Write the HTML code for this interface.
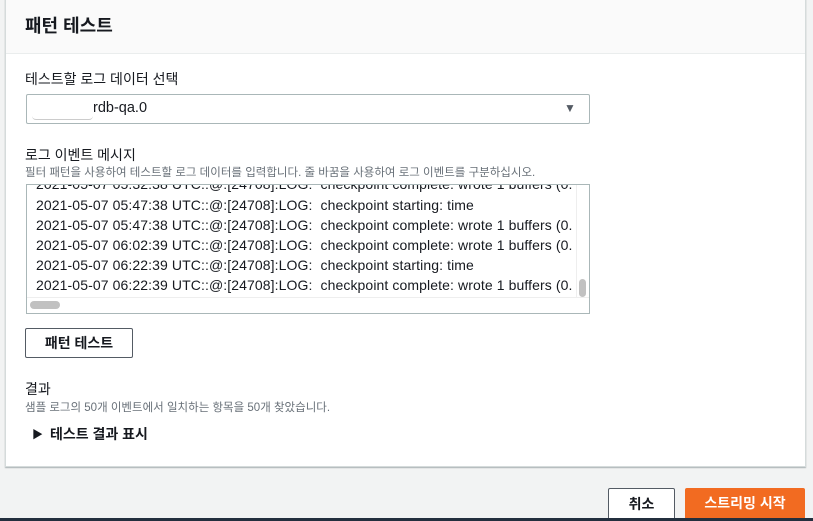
<!DOCTYPE html>
<html><head><meta charset="utf-8"><style>
*{margin:0;padding:0;box-sizing:border-box}
body{width:813px;height:521px;background:#f2f3f3;position:relative;overflow:hidden;font-family:"Liberation Sans","Noto Sans CJK KR",sans-serif;color:#16191f}
.abs{position:absolute;white-space:nowrap}
.panel{position:absolute;left:5px;top:-2px;width:801px;height:469px;background:#fff;border:1px solid #d5dbdb;box-shadow:0 1px 1px rgba(0,28,36,.3)}
.hdr{position:absolute;left:0;top:0;width:100%;height:55px;background:#fafafa;border-bottom:1px solid #eaeded}
.ta{position:absolute;left:26px;top:184px;width:564px;height:130px;border:1px solid #aab7b8;overflow:hidden;background:#fff}
.ln{position:absolute;left:9px;font-size:14px;letter-spacing:0.1px;white-space:nowrap;color:#16191f}
</style></head><body>
<div class="panel"><div class="hdr"></div></div>
<div class="abs" style="left:25px;top:12px;font-size:18px;font-weight:bold">패턴 테스트</div>
<div class="abs" style="left:25px;top:69px;font-size:14px">테스트할 로그 데이터 선택</div>
<div class="abs" style="left:26px;top:94px;width:564px;height:30px;border:1px solid #aab7b8;border-radius:2px;background:#fff"></div>
<div class="abs" style="left:32px;top:98px;width:61px;height:22px;border-bottom:1px solid #ccc;border-radius:0 0 4px 4px"></div>
<div class="abs" style="left:93px;top:100px;font-size:14.5px">rdb-qa.0</div>
<div class="abs" style="left:564px;top:101px;font-size:12px;color:#545b64">▼</div>
<div class="abs" style="left:25px;top:145px;font-size:14px">로그 이벤트 메시지</div>
<div class="abs" style="left:25px;top:164px;font-size:11.5px;color:#687078">필터 패턴을 사용하여 테스트할 로그 데이터를 입력합니다. 줄 바꿈을 사용하여 로그 이벤트를 구분하십시오.</div>
<div class="ta">
<div class="ln" style="top:-9px">2021-05-07 05:32:38 UTC::@:[24708]:LOG:&nbsp; checkpoint complete: wrote 1 buffers (0.</div>
<div class="ln" style="top:12px">2021-05-07 05:47:38 UTC::@:[24708]:LOG:&nbsp; checkpoint starting: time</div>
<div class="ln" style="top:32px">2021-05-07 05:47:38 UTC::@:[24708]:LOG:&nbsp; checkpoint complete: wrote 1 buffers (0.</div>
<div class="ln" style="top:52px">2021-05-07 06:02:39 UTC::@:[24708]:LOG:&nbsp; checkpoint complete: wrote 1 buffers (0.</div>
<div class="ln" style="top:72px">2021-05-07 06:22:39 UTC::@:[24708]:LOG:&nbsp; checkpoint starting: time</div>
<div class="ln" style="top:92px">2021-05-07 06:22:39 UTC::@:[24708]:LOG:&nbsp; checkpoint complete: wrote 1 buffers (0.</div>
<div style="position:absolute;left:0;top:112px;width:100%;height:18px;background:#fff;border-top:1px solid #eee"></div>
<div style="position:absolute;left:3px;top:116px;width:30px;height:8px;border-radius:4px;background:#c1c1c1"></div>
<div style="position:absolute;left:549px;top:0;width:14px;height:112px;background:#fff;border-left:1px solid #eee"></div>
<div style="position:absolute;left:552px;top:94px;width:7px;height:18px;border-radius:4px;background:#c1c1c1"></div>
</div>
<div class="abs" style="left:25px;top:328px;width:108px;height:30px;border:1px solid #545b64;border-radius:2px;background:#fff;font-size:14px;font-weight:bold;text-align:center;line-height:28px">패턴 테스트</div>
<div class="abs" style="left:25px;top:379px;font-size:14px">결과</div>
<div class="abs" style="left:25px;top:399px;font-size:11.5px;color:#687078">샘플 로그의 50개 이벤트에서 일치하는 항목을 50개 찾았습니다.</div>
<div class="abs" style="left:32px;top:426px;font-size:11px">▶</div>
<div class="abs" style="left:50px;top:424px;font-size:14px;font-weight:bold">테스트 결과 표시</div>
<div class="abs" style="left:608px;top:488px;width:67px;height:33px;border:1px solid #545b64;border-radius:2px;background:#fff;font-size:14px;font-weight:bold;text-align:center;line-height:30px">취소</div>
<div class="abs" style="left:685px;top:488px;width:120px;height:33px;border-radius:2px;background:#f26b21;color:#fff;font-size:14px;font-weight:bold;text-align:center;line-height:30px">스트리밍 시작</div>
<div class="abs" style="left:0;top:518px;width:813px;height:3px;background:#232f3e"></div>
</body></html>
